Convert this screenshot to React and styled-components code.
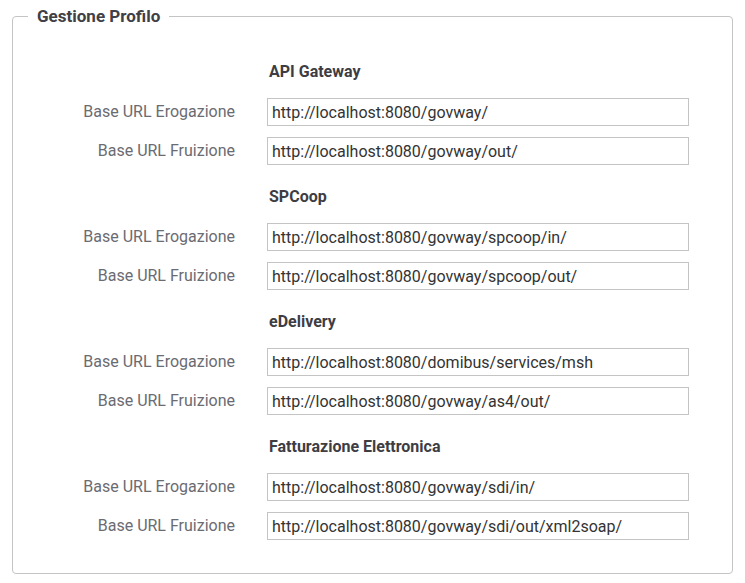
import styled, { createGlobalStyle } from "styled-components"

const GlobalStyle = createGlobalStyle`
    body{
        margin: 0;
        background: #ffffff;
        font-family: Roboto, "Liberation Sans", sans-serif;
    }
`

const sections = [
    {
        title: "API Gateway",
        erogazione: "http://localhost:8080/govway/",
        fruizione: "http://localhost:8080/govway/out/",
    },
    {
        title: "SPCoop",
        erogazione: "http://localhost:8080/govway/spcoop/in/",
        fruizione: "http://localhost:8080/govway/spcoop/out/",
    },
    {
        title: "eDelivery",
        erogazione: "http://localhost:8080/domibus/services/msh",
        fruizione: "http://localhost:8080/govway/as4/out/",
    },
    {
        title: "Fatturazione Elettronica",
        erogazione: "http://localhost:8080/govway/sdi/in/",
        fruizione: "http://localhost:8080/govway/sdi/out/xml2soap/",
    },
]

export default function App(){
    return(
        <Page>
            <GlobalStyle/>
            <Fieldset>
                <Legend>Gestione Profilo</Legend>
                {sections.map((s) => (
                    <Section key={s.title}>
                        <SectionTitle>{s.title}</SectionTitle>
                        <Row>
                            <Label>Base URL Erogazione</Label>
                            <Input type="text" defaultValue={s.erogazione}/>
                        </Row>
                        <Row>
                            <Label>Base URL Fruizione</Label>
                            <Input type="text" defaultValue={s.fruizione}/>
                        </Row>
                    </Section>
                ))}
            </Fieldset>
        </Page>
    )
}

const Page = styled.div`
    padding: 6px 12px 0;
`

const Fieldset = styled.fieldset`
    margin: 0;
    padding: 36px 0 33px 15px;
    border: 1px solid #c4c4c4;
    border-radius: 4px;
    min-width: 0;
`

const Legend = styled.legend`
    padding: 0 9px;
    font-size: 17px;
    line-height: 20px;
    font-weight: 700;
    color: #404046;
`

const Section = styled.div`
    display: flex;
    flex-direction: column;
    gap: 11px;
    margin-bottom: 22px;
    &:last-child{
        margin-bottom: 0;
    }
`

const SectionTitle = styled.div`
    padding-left: 241px;
    margin-bottom: 5px;
    font-size: 16px;
    line-height: 20px;
    font-weight: 700;
    color: #3d3d43;
`

const Row = styled.div`
    display: grid;
    grid-template-columns: 207px 422px;
    column-gap: 32px;
    align-items: center;
`

const Label = styled.label`
    padding-bottom: 2px;
    text-align: right;
    font-size: 16px;
    color: #6b6b72;
`

const Input = styled.input`
    box-sizing: border-box;
    height: 28px;
    width: 100%;
    margin: 0;
    padding: 0 4px;
    border: 1px solid #c4c4c4;
    border-radius: 0;
    font-family: Roboto, "Liberation Sans", sans-serif;
    font-size: 16px;
    color: #333333;
    background: #ffffff;
    outline: none;
`
